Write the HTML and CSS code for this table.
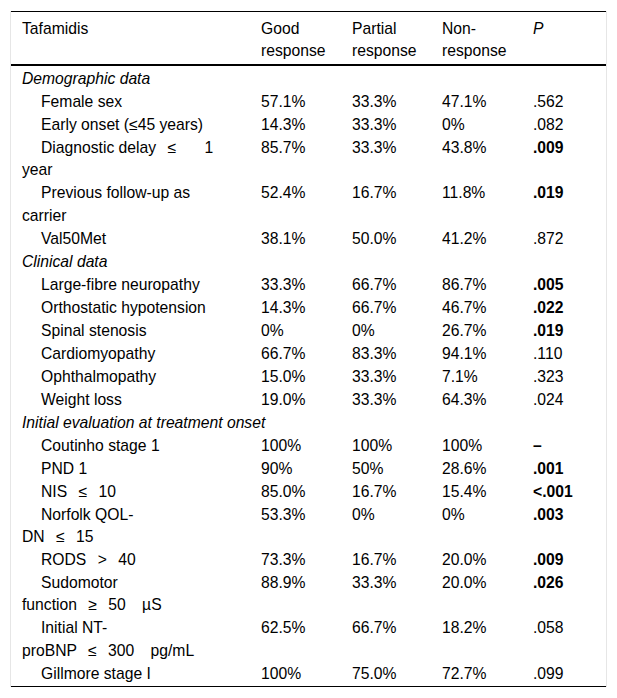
FILE: index.html
```html
<!DOCTYPE html>
<html lang="en">
<head>
<meta charset="utf-8">
<title>Tafamidis response</title>
<link rel="stylesheet" href="styles.css">
</head>
<body>
<div class="wrap">
<table class="tbl">
<colgroup><col class="c1"><col class="c2"><col class="c3"><col class="c4"><col class="c5"></colgroup>
<thead>
<tr><th>Tafamidis</th><th>Good response</th><th>Partial response</th><th>Non-response</th><th><i>P</i></th></tr>
</thead>
<tbody>
<tr class="first"><td colspan="5"><i>Demographic data</i></td></tr>
<tr><td class="ind">Female sex</td><td>57.1%</td><td>33.3%</td><td>47.1%</td><td>.562</td></tr>
<tr><td class="ind">Early onset (≤45 years)</td><td>14.3%</td><td>33.3%</td><td>0%</td><td>.082</td></tr>
<tr><td class="ind">Diagnostic delay<span class="ws1"> ≤</span><span class="ws3"> 1</span><br>year</td><td>85.7%</td><td>33.3%</td><td>43.8%</td><td><b>.009</b></td></tr>
<tr><td class="ind">Previous follow-up as<br>carrier</td><td>52.4%</td><td>16.7%</td><td>11.8%</td><td><b>.019</b></td></tr>
<tr><td class="ind">Val50Met</td><td>38.1%</td><td>50.0%</td><td>41.2%</td><td>.872</td></tr>
<tr><td colspan="5"><i>Clinical data</i></td></tr>
<tr><td class="ind">Large-fibre neuropathy</td><td>33.3%</td><td>66.7%</td><td>86.7%</td><td><b>.005</b></td></tr>
<tr><td class="ind">Orthostatic hypotension</td><td>14.3%</td><td>66.7%</td><td>46.7%</td><td><b>.022</b></td></tr>
<tr><td class="ind">Spinal stenosis</td><td>0%</td><td>0%</td><td>26.7%</td><td><b>.019</b></td></tr>
<tr><td class="ind">Cardiomyopathy</td><td>66.7%</td><td>83.3%</td><td>94.1%</td><td>.110</td></tr>
<tr><td class="ind">Ophthalmopathy</td><td>15.0%</td><td>33.3%</td><td>7.1%</td><td>.323</td></tr>
<tr><td class="ind">Weight loss</td><td>19.0%</td><td>33.3%</td><td>64.3%</td><td>.024</td></tr>
<tr><td colspan="5"><i>Initial evaluation at treatment onset</i></td></tr>
<tr><td class="ind">Coutinho stage 1</td><td>100%</td><td>100%</td><td>100%</td><td><b>–</b></td></tr>
<tr><td class="ind">PND 1</td><td>90%</td><td>50%</td><td>28.6%</td><td><b>.001</b></td></tr>
<tr><td class="ind"><span class="ws1">NIS ≤ 10</span></td><td>85.0%</td><td>16.7%</td><td>15.4%</td><td><b>&lt;.001</b></td></tr>
<tr><td class="ind">Norfolk QOL-<br><span class="ws1">DN ≤ 15</span></td><td>53.3%</td><td>0%</td><td>0%</td><td><b>.003</b></td></tr>
<tr><td class="ind"><span class="ws1">RODS &gt; 40</span></td><td>73.3%</td><td>16.7%</td><td>20.0%</td><td><b>.009</b></td></tr>
<tr><td class="ind">Sudomotor<br><span class="ws1">function ≥ 50</span><span class="ws2"> µS</span></td><td>88.9%</td><td>33.3%</td><td>20.0%</td><td><b>.026</b></td></tr>
<tr><td class="ind">Initial NT-<br><span class="ws1">proBNP ≤ 300</span><span class="ws2"> pg/mL</span></td><td>62.5%</td><td>66.7%</td><td>18.2%</td><td>.058</td></tr>
<tr class="last"><td class="ind">Gillmore stage I</td><td>100%</td><td>75.0%</td><td>72.7%</td><td>.099</td></tr>
</tbody>
</table>
</div>
</body>
</html>
```

FILE: styles.css
```css
html, body {
  margin: 0;
  padding: 0;
  background: #fff;
}
body {
  font-family: "Liberation Sans", Arial, sans-serif;
  font-size: 15.7px;
  line-height: 22.4px;
  color: #000;
}
.wrap {
  margin: 11px 0 0 10px;
  width: 595px;
  border-left: 1px solid #e6e6e6;
  border-right: 1px solid #e6e6e6;
}
.tbl {
  width: 595px;
  table-layout: fixed;
  border-collapse: separate;
  border-spacing: 0;
  border-top: 1px solid #000;
  border-bottom: 1px solid #000;
}
.c1 { width: 239px; }
.c2 { width: 91px; }
.c3 { width: 90px; }
.c4 { width: 91px; }
.c5 { width: 84px; }
.tbl th {
  font-weight: normal;
  text-align: left;
  vertical-align: top;
  padding: 5.7px 11px 1.5px 11px;
  border-bottom: 2px solid #000;
}
.tbl td {
  text-align: left;
  vertical-align: top;
  padding: 0.3px 11px;
}
.tbl td.ind {
  text-indent: 19px;
}
.tbl tr.first td {
  padding-top: 1.8px;
}
.tbl tr.last td {
  padding-bottom: 1px;
}
.ws1 { word-spacing: 7px; }
.ws2 { word-spacing: 12px; }
.ws3 { word-spacing: 24px; }
b { font-weight: bold; }
```
